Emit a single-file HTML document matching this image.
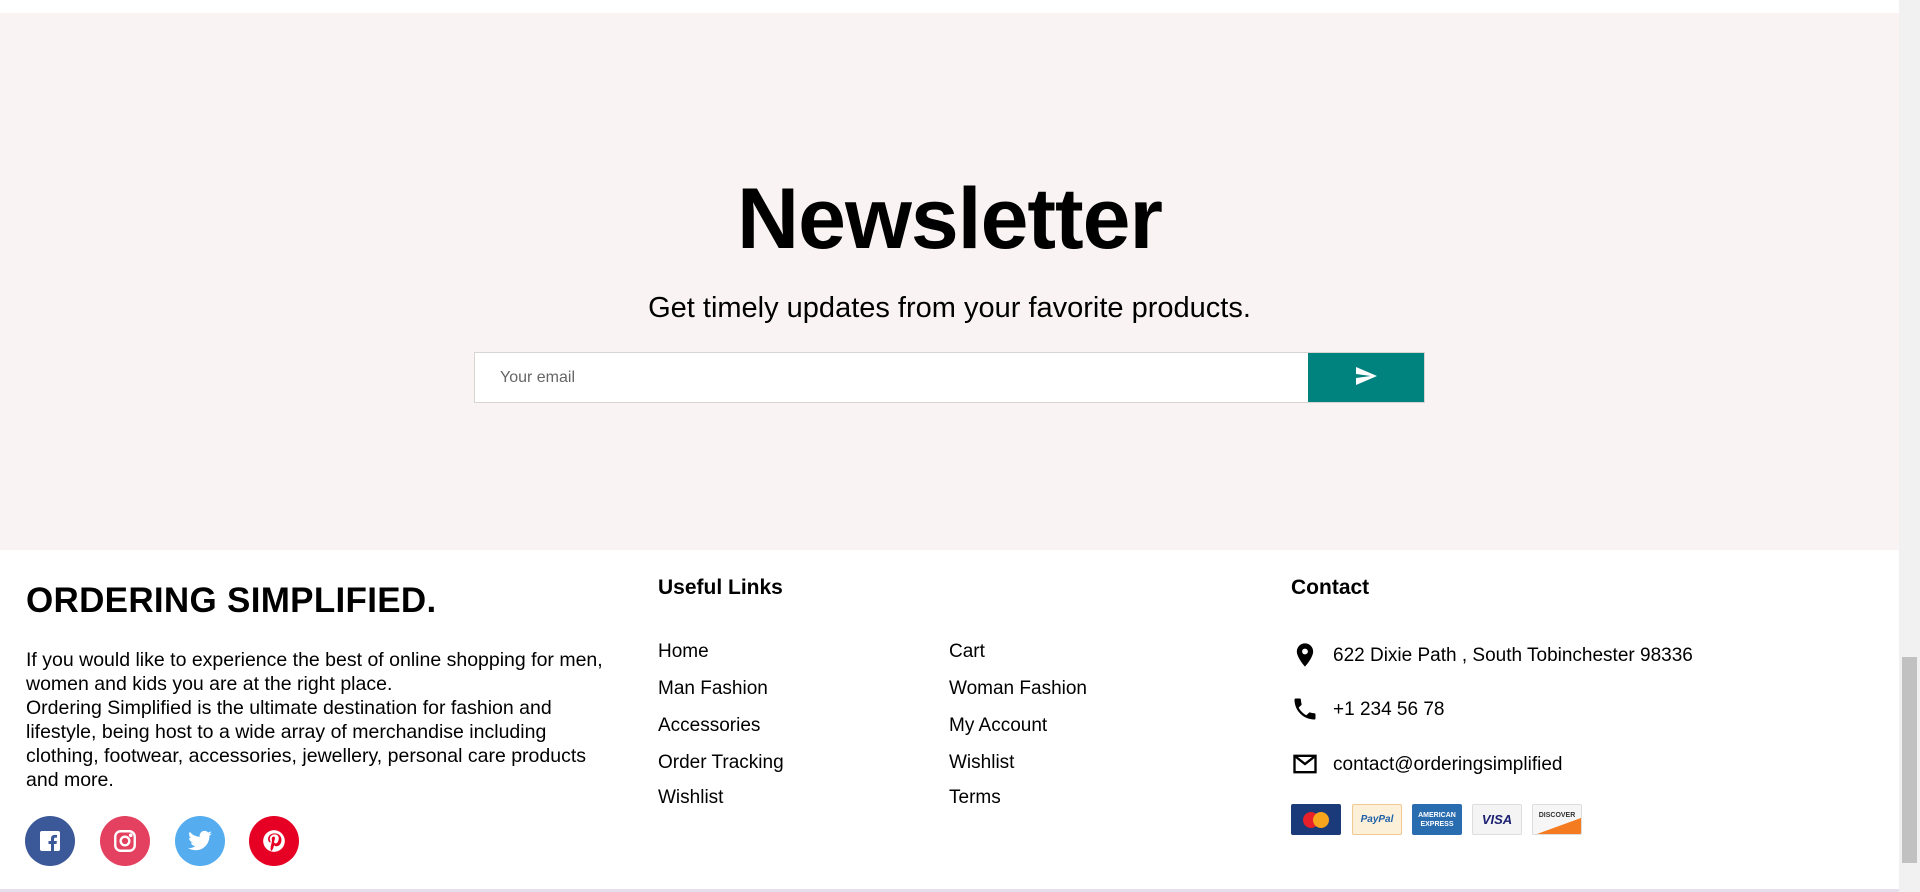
<!DOCTYPE html>
<html><head><meta charset="utf-8"><style>
*{margin:0;padding:0;box-sizing:border-box}
body{width:1920px;height:892px;overflow:hidden;background:#fff;font-family:"Liberation Sans",sans-serif;color:#000;position:relative}
.abs{position:absolute;white-space:nowrap}
.news{position:absolute;left:0;top:13px;width:1899px;height:537px;background:#f9f3f3}
.sb{position:absolute;right:0;top:0;width:21px;height:892px;background:#f1f1f1}
.thumb{position:absolute;right:3px;top:657px;width:15px;height:206px;background:#c1c1c1}
.p{font-size:19.5px;line-height:24px;position:absolute;left:26px;top:648px;width:585px}
.lnk{font-size:19px;position:absolute}
.circ{position:absolute;width:50px;height:50px;border-radius:50%;top:816px;display:flex;align-items:center;justify-content:center}
.card{position:absolute;top:804px;width:50px;height:31px;border-radius:2px;font-size:10px;font-weight:bold;display:flex;align-items:center;justify-content:center;font-style:italic}
</style></head><body>
<div class="news"></div>
<div class="abs" style="left:0;width:1899px;text-align:center;top:170px;font-size:86px;font-weight:bold;letter-spacing:-1px">Newsletter</div>
<div class="abs" style="left:0;width:1899px;text-align:center;top:292px;font-size:29px;">Get timely updates from your favorite products.</div>
<div class="abs" style="left:474px;top:352px;width:951px;height:51px;background:#fff;border:1px solid #d8d4d4"></div>
<div class="abs" style="left:500px;top:369px;font-size:16px;color:#666">Your email</div>
<div class="abs" style="left:1308px;top:353px;width:116px;height:49px;background:#00827f"></div>
<svg class="abs" style="left:1352px;top:364px" width="28" height="24" viewBox="0 0 24 24"><path d="M2 21l21-9L2 3v7l15 2-15 2z" fill="#fff"/></svg>

<div class="abs" style="left:26px;top:581px;font-size:35px;font-weight:bold;letter-spacing:0.3px">ORDERING SIMPLIFIED.</div>
<div class="p">If you would like to experience the best of online shopping for men, women and kids you are at the right place.<br>Ordering Simplified is the ultimate destination for fashion and lifestyle, being host to a wide array of merchandise including clothing, footwear, accessories, jewellery, personal care products and more.</div>
<div class="circ" style="left:25px;background:#3b5998"><svg width="24" height="24" viewBox="0 0 24 24"><rect x="2" y="2" width="20" height="20" rx="2" fill="#fff"/><path d="M16 22v-7h2.5l.4-3H16v-2c0-.8.3-1.4 1.4-1.4H19V6c-.3 0-1.2-.1-2.3-.1-2.3 0-3.7 1.4-3.7 3.8V12h-2.5v3H13v7z" fill="#3b5998"/></svg></div>
<div class="circ" style="left:100px;background:#e4405f"><svg width="26" height="26" viewBox="0 0 24 24" fill="none" stroke="#fff" stroke-width="2.2"><rect x="3" y="3" width="18" height="18" rx="5"/><circle cx="12" cy="12" r="4"/><circle cx="17.3" cy="6.7" r=".6" fill="#fff"/></svg></div>
<div class="circ" style="left:175px;background:#55acee"><svg width="26" height="26" viewBox="0 0 24 24"><path d="M23 5a9 9 0 01-2.6.7A4.5 4.5 0 0022.4 3a9 9 0 01-2.9 1.1 4.5 4.5 0 00-7.7 4.1A12.8 12.8 0 012.5 3.5a4.5 4.5 0 001.4 6 4.5 4.5 0 01-2-.6 4.5 4.5 0 003.6 4.5 4.5 4.5 0 01-2 .1 4.5 4.5 0 004.2 3.1A9 9 0 011 18.5 12.8 12.8 0 007.9 20.5c8.3 0 12.8-6.9 12.8-12.8v-.6A9 9 0 0023 5z" fill="#fff"/></svg></div>
<div class="circ" style="left:249px;background:#e60023"><svg width="26" height="26" viewBox="0 0 24 24"><circle cx="12" cy="12" r="10" fill="#fff"/><path d="M12.5 5C8.5 5 6.5 7.8 6.5 10.2c0 1.4.5 2.7 1.7 3.2.2.1.4 0 .4-.2l.2-.7c.1-.2 0-.3-.1-.5-.4-.4-.6-1-.6-1.800 0-2.300 1.700-4.300 4.500-4.300 2.500 0 3.800 1.500 3.800 3.500 0 2.600-1.200 4.900-2.900 4.900-1 0-1.700-.8-1.400-1.800.3-1.100.8-2.400.8-3.200 0-.7-.4-1.400-1.200-1.400-1 0-1.800 1-1.800 2.400 0 .9.3 1.500.3 1.500L9 17.2c-.3 1.300-.1 2.900 0 3.600l1 .2c.3-.5 1.200-2 1.500-3l.6-2.200c.3.6 1.200 1.100 2.100 1.100 2.800 0 4.700-2.500 4.700-6C18.900 7.800 16.600 5 12.500 5z" fill="#e60023"/></svg></div>

<div class="abs" style="left:658px;top:576px;font-size:21px;font-weight:bold">Useful Links</div>
<div class="lnk abs" style="left:658px;top:641px">Home</div>
<div class="lnk abs" style="left:658px;top:678px">Man Fashion</div>
<div class="lnk abs" style="left:658px;top:715px">Accessories</div>
<div class="lnk abs" style="left:658px;top:752px">Order Tracking</div>
<div class="lnk abs" style="left:658px;top:787px">Wishlist</div>
<div class="lnk abs" style="left:949px;top:641px">Cart</div>
<div class="lnk abs" style="left:949px;top:678px">Woman Fashion</div>
<div class="lnk abs" style="left:949px;top:715px">My Account</div>
<div class="lnk abs" style="left:949px;top:752px">Wishlist</div>
<div class="lnk abs" style="left:949px;top:787px">Terms</div>

<div class="abs" style="left:1291px;top:576px;font-size:21px;font-weight:bold">Contact</div>
<svg class="abs" style="left:1291px;top:640px" width="28" height="30" viewBox="0 0 24 24"><path d="M12 2C8.1 2 5 5.1 5 9c0 5.2 7 13 7 13s7-7.8 7-13c0-3.9-3.1-7-7-7zm0 9.5a2.5 2.5 0 110-5 2.5 2.5 0 010 5z"/></svg>
<div class="lnk abs" style="left:1333px;top:645px">622 Dixie Path , South Tobinchester 98336</div>
<svg class="abs" style="left:1291px;top:695px" width="28" height="28" viewBox="0 0 24 24"><path d="M6.6 10.8c1.4 2.8 3.8 5.1 6.6 6.6l2.2-2.2c.3-.3.7-.4 1-.2 1.1.4 2.3.6 3.6.6.6 0 1 .4 1 1V20c0 .6-.4 1-1 1C10.6 21 3 13.4 3 4c0-.6.4-1 1-1h3.5c.6 0 1 .4 1 1 0 1.3.2 2.5.6 3.6.1.3 0 .7-.2 1z"/></svg>
<div class="lnk abs" style="left:1333px;top:699px">+1 234 56 78</div>
<svg class="abs" style="left:1291px;top:750px" width="28" height="28" viewBox="0 0 24 24"><path d="M3 5h18v14H3z M3 5l9 7 9-7" fill="none" stroke="#000" stroke-width="2"/></svg>
<div class="lnk abs" style="left:1333px;top:754px">contact@orderingsimplified</div>
<div class="card" style="left:1291px;background:#1a3a7a"><div style="width:16px;height:16px;border-radius:50%;background:#e8202a"></div><div style="width:16px;height:16px;border-radius:50%;background:#f7a51c;margin-left:-6px"></div></div>
<div class="card" style="left:1352px;background:#fdf0d9;border:1px solid #f0c890;color:#1d5fa8">PayPal</div>
<div class="card" style="left:1412px;background:#2a6cb0;color:#fff;font-size:7px;font-style:normal;text-align:center;line-height:9px">AMERICAN<br>EXPRESS</div>
<div class="card" style="left:1472px;background:#f4f4f4;border:1px solid #ddd;color:#1a1f71;font-size:13px">VISA</div>
<div class="card" style="left:1532px;background:linear-gradient(160deg,#f6f6f6 65%,#f47b20 66%);border:1px solid #ddd;color:#333;font-size:7px;font-style:normal;align-items:flex-start;padding-top:7px">DISCOVER</div>

<div class="abs" style="left:0;top:889px;width:1899px;height:3px;background:#e6e0ee"></div>
<div class="sb"><div class="thumb"></div></div>
</body></html>
